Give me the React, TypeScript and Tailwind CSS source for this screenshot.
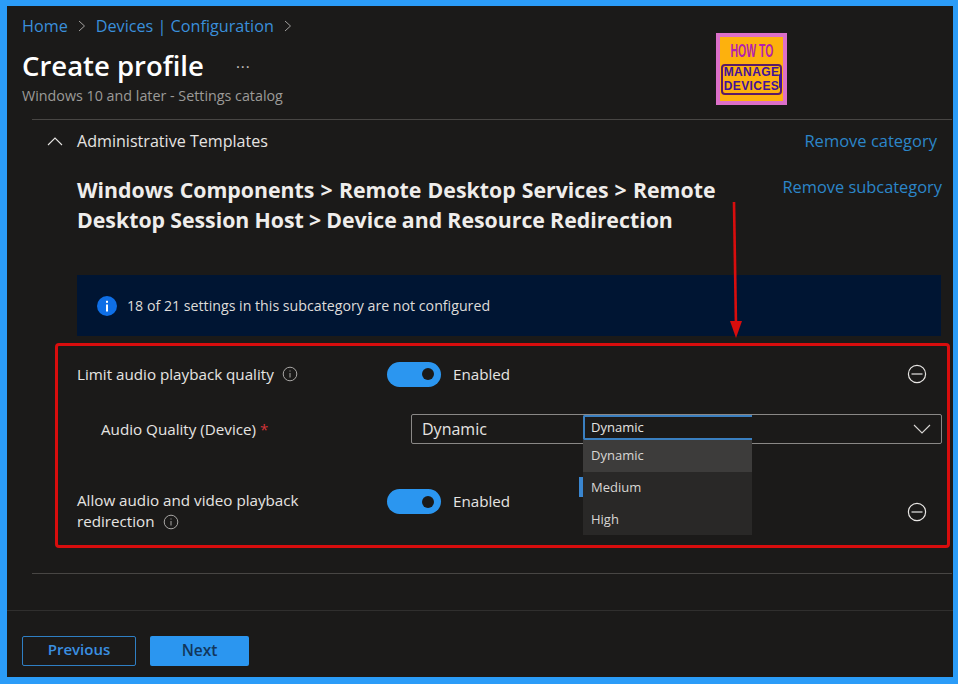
import React from "react";

const font = { fontFamily: '"Open Sans", "Noto Sans", "Liberation Sans", sans-serif' };

function Chevron({ className = "" }: { className?: string }) {
  return (
    <svg className={className} width="10" height="14" viewBox="0 0 10 14" fill="none" stroke="#a19f9d" strokeWidth="1">
      <path d="M2 2l5.5 5L2 12" />
    </svg>
  );
}

function InfoOutline() {
  return (
    <svg width="16" height="16" viewBox="0 0 16 16" fill="none" stroke="#a8a6a4" strokeWidth="1">
      <circle cx="8" cy="8" r="6.8" />
      <path d="M8 7v4.5M8 4.5v1" />
    </svg>
  );
}

function MinusCircle() {
  return (
    <svg className="mr-[15px]" width="20" height="20" viewBox="0 0 20 20" fill="none" stroke="#e8e6e4" strokeWidth="1.2">
      <circle cx="10" cy="10" r="8.6" />
      <path d="M4.5 10h11" />
    </svg>
  );
}

function Toggle() {
  return (
    <div className="flex h-[25px] w-[54px] shrink-0 items-center justify-end rounded-full bg-[#2b96f0] pr-[7px]">
      <div className="h-[12px] w-[12px] rounded-full bg-[#1b1a19]" />
    </div>
  );
}

function Logo() {
  return (
    <div className="absolute left-[709px] top-[27px] flex h-[72px] w-[71px] flex-col items-center overflow-hidden border-[4px] border-[#dc6fc8] bg-[#fdb10d] pt-[4px]">
      <div className="whitespace-nowrap text-[19px] font-bold leading-[20px] text-[#b41fb0]" style={{ fontFamily: '"Liberation Sans", sans-serif', transform: "scaleX(0.55)" }}>
        HOW TO
      </div>
      <div className="relative mt-[3px] flex h-[31px] w-[61px] shrink-0 flex-col items-center justify-center rounded-[4px] border-2 border-[#5b1a66] text-[12px] font-bold leading-[13.5px] tracking-[0.4px] text-[#42129a]" style={{ fontFamily: '"Liberation Sans", sans-serif' }}>
        <span className="whitespace-nowrap">MANAGE</span>
        <span className="whitespace-nowrap">DEVICES</span>
        <div className="absolute right-[-2px] top-[8px] h-[14px] w-[3px] rounded-[1px] bg-[#42129a]" />
      </div>
    </div>
  );
}

function Arrow() {
  return (
    <svg className="absolute left-[722px] top-[196px]" width="14" height="136" viewBox="0 0 14 136">
      <path d="M5 0L7 124" stroke="#d80d0d" strokeWidth="2.6" />
      <path d="M1 119H13L7 136Z" fill="#d80d0d" />
    </svg>
  );
}

export default function App() {
  return (
    <div className="relative flex h-[684px] w-[958px] flex-col overflow-hidden border-b-[7px] border-l-[7px] border-r-[5px] border-t-[6px] border-[#2b9cf8] bg-[#1b1a19] text-[#e6e4e2]" style={font}>
      <Logo />
      <Arrow />

      <header className="px-[15px] pt-[8px]">
        <nav className="flex h-[24px] items-center gap-[9px] text-[16.2px] text-[#3a8fdb]">
          <span>Home</span>
          <Chevron />
          <span>Devices | Configuration</span>
          <Chevron />
        </nav>
        <div className="mt-[8px] flex h-[40px] items-center">
          <h1 className="text-[27.5px] font-semibold text-white">Create profile</h1>
          <span className="ml-[32px] text-[15px] tracking-[1px] text-[#c8c6c4]">···</span>
        </div>
        <p className="h-[20px] text-[14.3px] leading-[20px] text-[#9c9a98]">Windows 10 and later - Settings catalog</p>
      </header>

      <main className="ml-[25px] mr-[1px] mt-[13px] flex-1 border-t border-[#484644]">
        <div className="flex h-[42px] items-center pr-[10px]">
          <svg className="ml-[15px]" width="16" height="10" viewBox="0 0 16 10" fill="none" stroke="#e6e4e2" strokeWidth="1.1">
            <path d="M1 9l7-7 7 7" />
          </svg>
          <span className="ml-[14px] flex-1 text-[16.1px]">Administrative Templates</span>
          <span className="mr-[5px] text-[16.5px] text-[#2c86c9]">Remove category</span>
        </div>

        <div className="flex items-start pl-[45px] pr-[10px]">
          <h2 className="mt-[13px] w-[655px] text-[21.3px] font-bold leading-[30px] text-[#efedeb]">
            <span className="block whitespace-nowrap [word-spacing:0.6px]">Windows Components &gt; Remote Desktop Services &gt; Remote</span>
            <span className="block whitespace-nowrap [word-spacing:-0.4px]">Desktop Session Host &gt; Device and Resource Redirection</span>
          </h2>
          <span className="mt-[13px] flex-1 text-right text-[16.4px] text-[#2c86c9]">Remove subcategory</span>
        </div>

        <div className="ml-[45px] mr-[11px] mt-[40px] flex h-[61px] items-center gap-[10px] bg-[#001533] pl-[20px] text-[14.2px] text-[#dedcda]">
          <svg width="20" height="20" viewBox="0 0 20 20">
            <circle cx="10" cy="10" r="10" fill="#0f6fe6" />
            <rect x="9" y="8.5" width="2" height="7" fill="#fff" />
            <rect x="9" y="4.8" width="2" height="2" fill="#fff" />
          </svg>
          18 of 21 settings in this subcategory are not configured
        </div>

        <section className="relative ml-[23px] mr-[2px] mt-[7px] h-[205px] rounded-[4px] border-[3px] border-[#d80d0d] pl-[19px] pr-[5px]">
          <div className="flex h-[56px] items-center">
            <div className="flex w-[310px] items-center gap-[8px] text-[15.2px]">
              Limit audio playback quality <InfoOutline />
            </div>
            <Toggle />
            <span className="ml-[12px] flex-1 text-[15.2px]">Enabled</span>
            <MinusCircle />
          </div>

          <div className="flex h-[54px] items-center">
            <div className="w-[334px] pl-[24px] text-[15.2px]">
              Audio Quality (Device) <span className="text-[#d13438]">*</span>
            </div>
            <div className="relative flex h-[30px] flex-1 items-center justify-between rounded-[2px] border border-[#8a8886] pl-[10px] pr-[10px] text-[16px]">
              Dynamic
              <svg width="18" height="10" viewBox="0 0 18 10" fill="none" stroke="#d8d6d4" strokeWidth="1.1">
                <path d="M1 1l8 8 8-8" />
              </svg>
              <div className="absolute left-[171px] top-[0px] z-10 w-[169px] text-[13px]">
                <div className="flex h-[25px] items-center rounded-l-[2px] border-y-2 border-l-2 border-[#3a7fc0] bg-[#1b1a19] pl-[6px]">Dynamic</div>
                <div className="flex h-[32px] items-center bg-[#3d3c3b] pl-[8px] text-[#d8d6d4]">Dynamic</div>
                <div className="relative flex h-[32px] items-center bg-[#292827] pl-[8px] text-[#d8d6d4]">
                  <div className="absolute left-[-4px] top-[5px] h-[20px] w-[4px] bg-[#3a86d0]" />
                  Medium
                </div>
                <div className="flex h-[31px] items-center bg-[#292827] pl-[8px] text-[#d8d6d4]">High</div>
              </div>
            </div>
          </div>

          <div className="mt-[34px] flex items-start">
            <div className="w-[310px] text-[15.2px] leading-[21px]">
              Allow audio and video playback
              <div className="flex items-center gap-[8px]">redirection <InfoOutline /></div>
            </div>
            <div className="-mt-[1px]"><Toggle /></div>
            <span className="ml-[12px] flex-1 text-[15.2px]">Enabled</span>
            <div className="mt-[12px]"><MinusCircle /></div>
          </div>
        </section>

        <div className="mt-[25px] border-t border-[#484644]" />
      </main>

      <footer className="flex h-[67px] items-start gap-[14px] border-t border-[#302f2e] px-[15px] pt-[25px]">
        <button className="h-[30px] w-[114px] rounded-[2px] border border-[#2f7fc4] pb-[3px] text-[15px] font-semibold text-[#3a8fe0]">Previous</button>
        <button className="h-[30px] w-[99px] rounded-[2px] bg-[#2b96f0] pb-[1px] text-[15.5px] font-semibold text-[#12365c]">Next</button>
      </footer>
    </div>
  );
}
